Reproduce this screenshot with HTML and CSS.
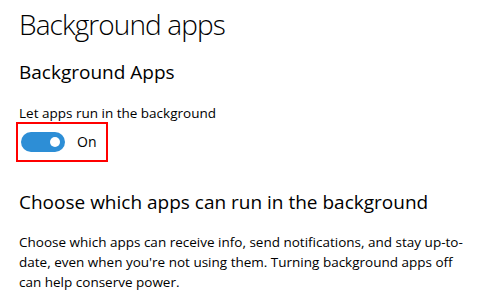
FILE: index.html
```html
<!DOCTYPE html>
<html lang="en">
<head>
    <meta charset="UTF-8">
    <title>Background apps</title>
    <link rel="stylesheet" href="styles.css">
</head>
<body>
    <div class="page">
        <h1 class="page-title">Background apps</h1>
        <h2 class="section-title">Background Apps</h2>
        <div class="setting">
            <p class="setting-label">Let apps run in the background</p>
            <div class="toggle-box">
                <span class="toggle on"><span class="knob"></span></span>
                <span class="toggle-text">On</span>
            </div>
        </div>
        <h2 class="section-title big">Choose which apps can run in the background</h2>
        <p class="description">Choose which apps can receive info, send notifications, and stay up-to-date, even when you're not using them. Turning background apps off can help conserve power.</p>
    </div>
</body>
</html>
```

FILE: styles.css
```css
* {
    margin: 0;
    padding: 0;
    box-sizing: border-box;
}

body {
    font-family: 'Open Sans', 'Noto Sans', sans-serif;
    background: #ffffff;
    color: #000000;
    overflow: hidden;
}

.page {
    padding: 0 20px 0 19px;
    width: 480px;
}

.page-title {
    font-size: 28px;
    font-weight: 300;
    line-height: 40px;
    letter-spacing: -0.9px;
    margin-top: 4px;
}

.section-title {
    font-size: 19px;
    font-weight: 400;
    line-height: 28px;
    margin-top: 14px;
}

.section-title.big {
    margin-top: 26px;
}

.setting {
    margin-top: 17px;
}

.setting-label {
    font-size: 13.5px;
    line-height: 20px;
}

.toggle-box {
    display: inline-flex;
    align-items: center;
    gap: 12px;
    margin: -1px 0 0 -3px;
    padding: 8px 10px 8px 3px;
    border: 2px solid #ff0000;
}

.toggle {
    display: flex;
    align-items: center;
    justify-content: flex-end;
    width: 44px;
    height: 20px;
    border-radius: 10px;
    background: #2d8ed6;
    padding: 0 5px;
}

.knob {
    width: 10px;
    height: 10px;
    border-radius: 50%;
    background: #ffffff;
}

.toggle-text {
    font-size: 14px;
    line-height: 20px;
}

.description {
    font-size: 13.5px;
    line-height: 20px;
    margin-top: 16px;
    width: 450px;
}
```
